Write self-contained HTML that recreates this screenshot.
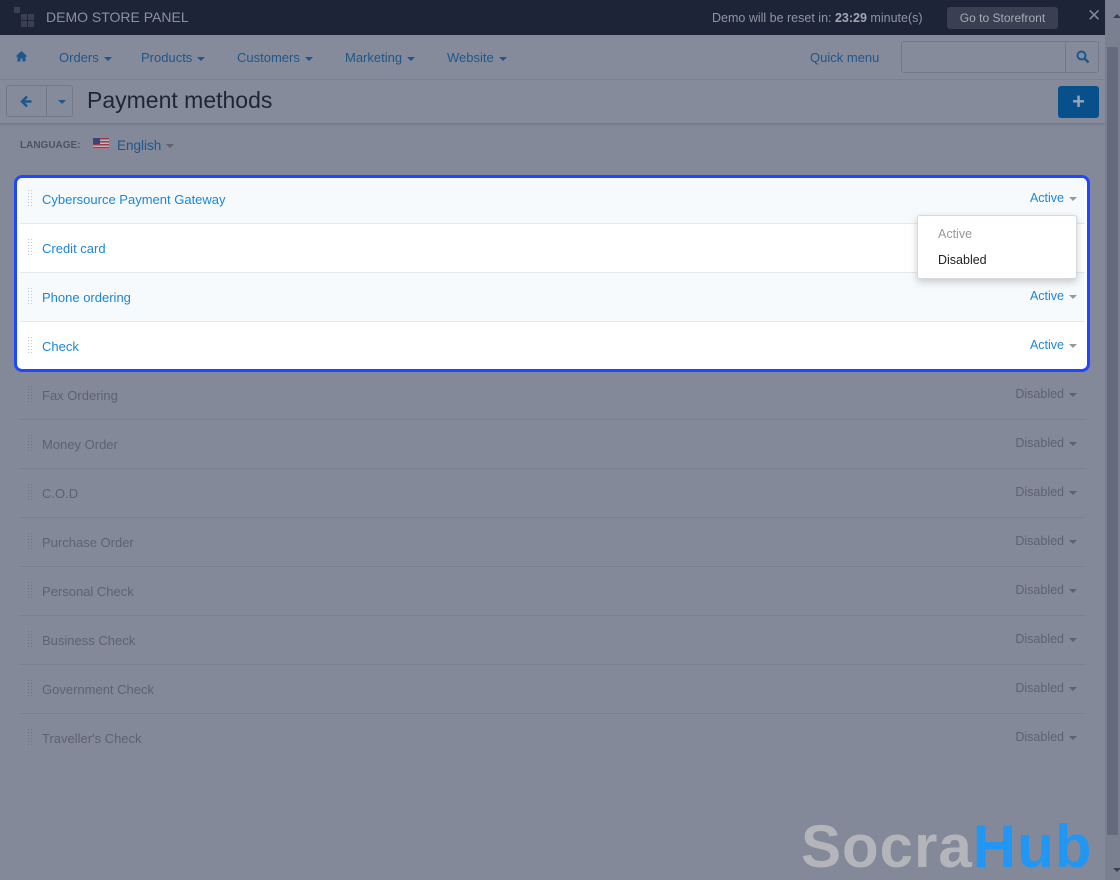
<!DOCTYPE html>
<html><head><meta charset="utf-8"><style>
*{box-sizing:border-box;margin:0;padding:0}
html,body{width:1120px;height:880px;overflow:hidden}
body{background:#848999;font-family:"Liberation Sans",sans-serif;position:relative}
.top{position:absolute;left:0;top:0;width:1105px;height:35px;background:#1e2437;color:#8d93a3}
.top .t{position:absolute;left:46px;top:9px;font-size:14px;color:#8b91a0}
.logo{position:absolute;left:14px;top:7px}
.logo i{position:absolute;width:6px;height:6px;background:#3a4052}
.top .r{position:absolute;left:712px;top:11px;font-size:12.5px;color:#8f95a4}
.top .r b{color:#a2a7b4}
.btn{position:absolute;left:947px;top:7px;width:111px;height:22px;background:#3a4052;border-radius:3px;color:#a5aab6;font-size:12px;text-align:center;line-height:22px}
.x{position:absolute;left:1087px;top:6px;color:#7f8595;font-size:17px}
.nav{position:absolute;left:0;top:35px;width:1105px;height:45px;background:#868b9b;border-bottom:1px solid #7c8191}
.nav span{position:absolute;top:15px;font-size:13px;color:#1d578b}
.car{display:inline-block;width:0;height:0;border-left:4px solid transparent;border-right:4px solid transparent;border-top:4px solid currentColor;vertical-align:middle;margin-left:5px}
.srch{position:absolute;left:901px;top:6px;width:198px;height:32px;border:1px solid #737889;border-radius:3px}
.srch div{position:absolute;right:0;top:0;width:33px;height:30px;border-left:1px solid #737889}
.hdr{position:absolute;left:0;top:80px;width:1105px;height:43px;background:#868b9b;box-shadow:0 2px 2px rgba(0,0,0,.12)}
.bk{position:absolute;left:6px;top:5px;width:67px;height:32px;border:1px solid #737889;border-radius:3px}
.bk div{position:absolute;left:39px;top:0;width:1px;height:30px;background:#737889}
.ttl{position:absolute;left:87px;top:7px;font-size:23px;color:#1f2535}
.plus{position:absolute;left:1058px;top:6px;width:41px;height:32px;background:#08508b;border-radius:3px;color:#9aa6b8;font-size:22px;font-weight:bold;text-align:center;line-height:31px}
.lang{position:absolute;left:20px;top:140px;font-size:10px;font-weight:bold;color:#4d5262}
.flag{position:absolute;left:93px;top:138px;width:16px;height:11px;background:repeating-linear-gradient(#9c3a4a 0 1.5px,#b8b8c4 1.5px 3px)}
.flag i{position:absolute;left:0;top:0;width:7px;height:6px;background:#3b4478}
.eng{position:absolute;left:117px;top:138px;font-size:13.5px;color:#1d578b}
.row{position:absolute;left:20px;width:1065px;height:49px;border-bottom:1px solid #7a7f90}
.row .h{position:absolute;left:7px;top:14px;width:6px;height:19px;background:radial-gradient(circle,#6f7484 0.6px,transparent 0.8px) 0 0/3px 3px}
.row .n{position:absolute;left:22px;top:17px;font-size:13px;color:#5d6272}
.row .s{position:absolute;right:8px;top:16px;font-size:12.5px;color:#5d6272}
.box{position:absolute;left:14px;top:175px;width:1076px;height:197px;border:3px solid #1f47ff;border-radius:8px;background:#fff;overflow:hidden}
.brow{position:absolute;left:3px;width:1065px;height:49px;border-bottom:1px solid #e6e8eb}
.brow .h{position:absolute;left:7px;top:14px;width:6px;height:19px;background:radial-gradient(circle,#c5c9cf 0.6px,transparent 0.8px) 0 0/3px 3px}
.brow .n{position:absolute;left:22px;top:17px;font-size:13px;color:#1d86d5}
.brow .s{position:absolute;right:8px;top:16px;font-size:12.5px;color:#1d86d5}
.brow .s .car{color:#999}
.dd{position:absolute;left:917px;top:215px;width:160px;height:64px;background:#fff;border:1px solid #d8d8d8;border-radius:3px;box-shadow:0 3px 8px rgba(0,0,0,.2)}
.dd div{position:absolute;left:20px;font-size:12.5px}
.sb{position:absolute;left:1105px;top:0;width:15px;height:880px;background:#7b8090}
.sb .th{position:absolute;left:2px;top:47px;width:11px;height:788px;background:#656a7c}
.wm{position:absolute;left:801px;top:812px;font-size:60px;font-weight:bold;font-family:"Liberation Sans",sans-serif;color:#b3b5ba;line-height:70px;white-space:nowrap;letter-spacing:1px}
.wm b{color:#2196f3}
</style></head><body>
<div class="top">
 <div class="logo"><i style="left:0;top:0"></i><i style="left:7px;top:7px"></i><i style="left:14px;top:7px"></i><i style="left:7px;top:14px"></i><i style="left:14px;top:14px"></i></div>
 <div class="t">DEMO STORE PANEL</div>
 <div class="r">Demo will be reset in: <b>23:29</b> minute(s)</div>
 <div class="btn">Go to Storefront</div>
 <div class="x">✕</div>
</div>
<div class="nav">
 <span style="left:15px;top:15px"><svg width="13" height="12" viewBox="0 0 13 12"><path d="M6.5 1L0.5 6.5h2v5h3v-3h2v3h3v-5h2z" fill="#1d578b"/></svg></span>
 <span style="left:59px">Orders<i class="car"></i></span>
 <span style="left:141px">Products<i class="car"></i></span>
 <span style="left:237px">Customers<i class="car"></i></span>
 <span style="left:345px">Marketing<i class="car"></i></span>
 <span style="left:447px">Website<i class="car"></i></span>
 <span style="left:810px">Quick menu</span>
 <div class="srch"><div><svg style="position:absolute;left:10px;top:8px" width="14" height="14" viewBox="0 0 14 14"><circle cx="5.5" cy="5.5" r="4" stroke="#1d578b" stroke-width="2" fill="none"/><path d="M8.5 8.5l4 4" stroke="#1d578b" stroke-width="2.5"/></svg></div></div>
</div>
<div class="hdr">
 <div class="bk"><svg style="position:absolute;left:13px;top:9px" width="13" height="13" viewBox="0 0 13 13"><path d="M7 1.5L2 6.5l5 5M2.5 6.5h9" stroke="#1d578b" stroke-width="2.5" fill="none"/></svg><div></div><i class="car" style="position:absolute;left:46px;top:14px;color:#1d578b"></i></div>
 <div class="ttl">Payment methods</div>
 <div class="plus">+</div>
</div>
<div class="lang">LANGUAGE:</div>
<div class="flag"><i></i></div>
<div class="eng">English<i class="car" style="color:#5d6272"></i></div>

<div class="row" style="top:371px"><div class="h"></div><div class="n">Fax Ordering</div><div class="s">Disabled<i class="car"></i></div></div>
<div class="row" style="top:420px"><div class="h"></div><div class="n">Money Order</div><div class="s">Disabled<i class="car"></i></div></div>
<div class="row" style="top:469px"><div class="h"></div><div class="n">C.O.D</div><div class="s">Disabled<i class="car"></i></div></div>
<div class="row" style="top:518px"><div class="h"></div><div class="n">Purchase Order</div><div class="s">Disabled<i class="car"></i></div></div>
<div class="row" style="top:567px"><div class="h"></div><div class="n">Personal Check</div><div class="s">Disabled<i class="car"></i></div></div>
<div class="row" style="top:616px"><div class="h"></div><div class="n">Business Check</div><div class="s">Disabled<i class="car"></i></div></div>
<div class="row" style="top:665px"><div class="h"></div><div class="n">Government Check</div><div class="s">Disabled<i class="car"></i></div></div>
<div class="row" style="top:714px;border-bottom:none"><div class="h"></div><div class="n">Traveller's Check</div><div class="s">Disabled<i class="car"></i></div></div>

<div class="box">
 <div class="brow" style="top:-3px;background:#f6fafd"><div class="h"></div><div class="n">Cybersource Payment Gateway</div><div class="s">Active<i class="car"></i></div></div>
 <div class="brow" style="top:46px"><div class="h"></div><div class="n">Credit card</div></div>
 <div class="brow" style="top:95px;background:#f6fafd"><div class="h"></div><div class="n">Phone ordering</div><div class="s">Active<i class="car"></i></div></div>
 <div class="brow" style="top:144px;border-bottom:none"><div class="h"></div><div class="n">Check</div><div class="s">Active<i class="car"></i></div></div>
</div>
<div class="dd"><div style="top:11px;color:#999">Active</div><div style="top:37px;color:#222">Disabled</div></div>

<div class="sb"><div class="th"></div><i class="car" style="position:absolute;left:3px;top:14px;transform:rotate(180deg);color:#3a3f50"></i><i class="car" style="position:absolute;left:3px;top:868px;color:#3a3f50"></i></div>
<div class="wm">Socra<b>Hub</b></div>
</body></html>
